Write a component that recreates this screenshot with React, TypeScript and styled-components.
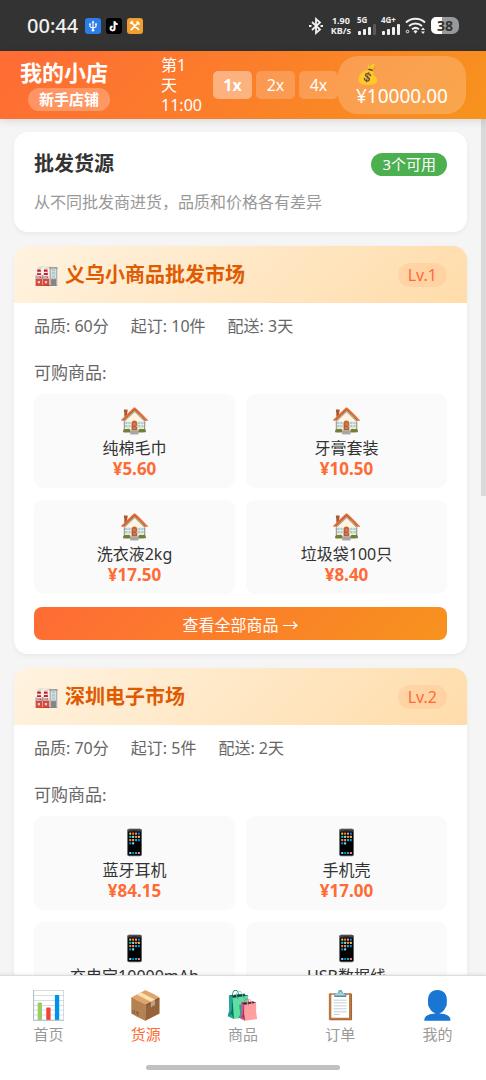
import React, { useState } from "react";
import styled, { createGlobalStyle, css } from "styled-components";

const GlobalStyle = createGlobalStyle`
  * { box-sizing: border-box; }
  body {
    margin: 0;
    background: #f5f5f5;
    color: #333;
    font-family: "Noto Sans", "Noto Sans CJK SC", sans-serif;
    font-size: 16px;
  }
  button { font-family: inherit; border: 0; padding: 0; cursor: pointer; }
  h1, h2, p, ul { margin: 0; padding: 0; }
  ul { list-style: none; }
`;

const Screen = styled.div`
  display: flex;
  flex-direction: column;
  height: 100vh;
`;

/* ---------- status bar ---------- */

const StatusBar = styled.div`
  flex: none;
  display: flex;
  align-items: center;
  justify-content: space-between;
  height: 51px;
  padding: 0 27px;
  background: #333;
  color: #f0f0f0;
`;

const StatusGroup = styled.div`
  display: flex;
  align-items: center;
  gap: 5px;
`;

const Clock = styled.span`
  margin-right: 2px;
  font-size: 20px;
  font-weight: 500;
  line-height: 24px;
`;

const NetSpeed = styled.span`
  margin: 0 1px 0 3px;
  font-size: 9px;
  font-weight: 700;
  line-height: 10px;
  text-align: center;
`;

const Signal = styled.span`
  display: flex;
  flex-direction: column;
  font-size: 8px;
  font-weight: 700;
  line-height: 8px;
`;

const Battery = styled.span`
  width: 28px;
  height: 17px;
  border-radius: 5px 7px 7px 5px;
  background: linear-gradient(90deg, #fff 38%, #999 38%);
  color: #333;
  font-size: 14px;
  font-weight: 700;
  line-height: 17px;
  text-align: center;
`;

/* ---------- shop header ---------- */

const Header = styled.header`
  flex: none;
  z-index: 1;
  display: flex;
  align-items: center;
  padding: 4px 20px;
  background: linear-gradient(135deg, #ff6b35, #f7931e);
  box-shadow: 0 2px 8px rgba(0, 0, 0, 0.12);
  color: #fff;
`;

const Shop = styled.div`
  flex: 1;
`;

const ShopName = styled.h1`
  margin-bottom: 4px;
  font-size: 22px;
  font-weight: 700;
  line-height: 24px;
`;

const ShopRank = styled.span`
  display: inline-block;
  margin-left: 8px;
  padding: 0 11px;
  border-radius: 12px;
  background: rgba(255, 255, 255, 0.25);
  font-size: 15px;
  font-weight: 700;
  line-height: 23px;
  vertical-align: top;
`;

const GameTime = styled.time`
  margin-right: 11px;
  font-size: 16px;
  line-height: 20px;
`;

const Speeds = styled.div`
  display: flex;
  gap: 4px;
`;

const SpeedButton = styled.button<{ $active: boolean }>`
  width: 39px;
  height: 28px;
  border-radius: 5px;
  background: rgba(255, 255, 255, ${(p) => (p.$active ? 0.4 : 0.2)});
  color: #fff;
  font-size: 16px;
  font-weight: ${(p) => (p.$active ? 700 : 400)};
`;

const Money = styled.div`
  padding: 7px 18px;
  border-radius: 20px;
  background: rgba(255, 255, 255, 0.2);
  font-size: 19px;
  line-height: 22px;
`;

const MoneyIcon = styled.span`
  display: block;
`;

/* ---------- content ---------- */

const Body = styled.div`
  flex: 1;
  min-height: 0;
  display: flex;
`;

const Main = styled.main`
  flex: 1;
  overflow-y: auto;
  scrollbar-width: none;
  display: flex;
  flex-direction: column;
  gap: 14px;
  padding: 13px 14px;
`;

const Rail = styled.div`
  flex: none;
  width: 5px;
`;

const Thumb = styled.div`
  height: 44%;
  background: #d9d9d9;
`;

const Card = styled.section`
  flex: none;
  overflow: hidden;
  border-radius: 14px;
  background: #fff;
  box-shadow: 0 2px 5px rgba(0, 0, 0, 0.05);
`;

const Intro = styled(Card)`
  display: grid;
  gap: 14px;
  padding: 20px 20px 18px;
`;

const Row = styled.div`
  display: flex;
  align-items: center;
  justify-content: space-between;
`;

const Title = styled.h2`
  font-size: 20px;
  font-weight: 700;
  line-height: 24px;
`;

const Available = styled.span`
  padding: 0 11px;
  border-radius: 12px;
  background: #4caf50;
  color: #fff;
  font-size: 15px;
  line-height: 23px;
`;

const Hint = styled.p`
  color: #999;
  font-size: 16px;
  line-height: 24px;
`;

const MarketHead = styled.div`
  display: flex;
  align-items: center;
  justify-content: space-between;
  height: 57px;
  padding: 0 20px;
  background: linear-gradient(135deg, #fff3e0, #ffdcaa);
`;

const MarketName = styled(Title)`
  display: flex;
  gap: 6px;
  color: #e05a00;
`;

const Level = styled.span`
  padding: 0 10px;
  border-radius: 12px;
  background: rgba(255, 107, 53, 0.1);
  color: #ff6b35;
  font-size: 16px;
  line-height: 24px;
`;

const MarketBody = styled.div`
  padding: 11px 20px 14px;
`;

const Facts = styled.ul`
  display: flex;
  gap: 22px;
  color: #666;
  font-size: 16px;
  line-height: 24px;
`;

const Label = styled.p`
  margin: 23px 0 9px;
  color: #666;
  font-size: 17px;
  line-height: 24px;
`;

const Goods = styled.ul`
  display: grid;
  grid-template-columns: 1fr 1fr;
  gap: 12px 11px;
`;

const GoodsItem = styled.li`
  display: flex;
  flex-direction: column;
  align-items: center;
  padding: 11px 8px 10px;
  border-radius: 9px;
  background: #fafafa;
`;

const GoodsIcon = styled.span`
  height: 33px;
  font-size: 25px;
  line-height: 29px;
`;

const GoodsName = styled.span`
  font-size: 16px;
  line-height: 21px;
`;

const Price = styled.span`
  color: #ff6b35;
  font-size: 17px;
  font-weight: 700;
  line-height: 19px;
`;

const ViewAll = styled.button`
  display: block;
  width: 100%;
  height: 33px;
  margin-top: 13px;
  border-radius: 8px;
  background: linear-gradient(135deg, #ff6b35, #f7931e);
  color: #fff;
  font-size: 16px;
`;

/* ---------- bottom tabs ---------- */

const TabBar = styled.nav`
  flex: none;
  border-top: 1px solid #ddd;
  background: #fff;
  box-shadow: 0 -1px 3px rgba(0, 0, 0, 0.08);
  z-index: 1;
`;

const Tabs = styled.div`
  display: grid;
  grid-template-columns: repeat(5, 1fr);
  padding-top: 11px;
`;

const Tab = styled.button<{ $active: boolean }>`
  display: flex;
  flex-direction: column;
  align-items: center;
  background: none;
  color: #999;
  font-size: 15px;
  line-height: 24px;
  ${(p) =>
    p.$active &&
    css`
      color: #ff6b35;
    `}
`;

const TabIcon = styled.span`
  height: 35px;
  font-size: 28px;
  line-height: 35px;
`;

const HomeBar = styled.div`
  width: 40%;
  height: 5px;
  margin: 19px auto 10px;
  border-radius: 3px;
  background: #c0c0c0;
`;

/* ---------- data ---------- */

type Product = { name: string; price?: string };
type Market = {
  name: string;
  level: number;
  quality: number;
  minimum: number;
  days: number;
  icon: string;
  products: Product[];
};

const markets: Market[] = [
  {
    name: "义乌小商品批发市场",
    level: 1,
    quality: 60,
    minimum: 10,
    days: 3,
    icon: "🏠",
    products: [
      { name: "纯棉毛巾", price: "5.60" },
      { name: "牙膏套装", price: "10.50" },
      { name: "洗衣液2kg", price: "17.50" },
      { name: "垃圾袋100只", price: "8.40" },
    ],
  },
  {
    name: "深圳电子市场",
    level: 2,
    quality: 70,
    minimum: 5,
    days: 2,
    icon: "📱",
    products: [
      { name: "蓝牙耳机", price: "84.15" },
      { name: "手机壳", price: "17.00" },
      { name: "充电宝10000mAh" },
      { name: "USB数据线" },
    ],
  },
];

const tabs = [
  { icon: "📊", label: "首页" },
  { icon: "📦", label: "货源" },
  { icon: "🛍️", label: "商品" },
  { icon: "📋", label: "订单" },
  { icon: "👤", label: "我的" },
];

/* ---------- status icons ---------- */

const UsbIcon = () => (
  <svg width="16" height="16" viewBox="0 0 16 16">
    <rect width="16" height="16" rx="3" fill="#2b7de9" />
    <path d="M8 4v8M5 6.500v2.200l3 1.600 3-1.600V6.500" fill="none" stroke="#fff" strokeWidth="1.100" />
    <path d="M8 2.500l1.500 2.200h-3z" fill="#fff" />
    <circle cx="8" cy="12.300" r="1.300" fill="#fff" />
    <circle cx="5" cy="6.300" r="1" fill="#fff" />
    <rect x="10.100" y="5.300" width="1.800" height="1.800" fill="#fff" />
  </svg>
);

const NoteIcon = () => (
  <svg width="16" height="16" viewBox="0 0 16 16">
    <rect width="16" height="16" rx="3" fill="#000" />
    <g fill="none" strokeWidth="1.500">
      <path d="M8.200 3v7.200a2 2 0 1 1-2-2M8.200 3c.2 1.800 1.400 2.800 3 3" stroke="#25f4ee" />
      <path d="M9 3.600v7.200a2 2 0 1 1-2-2M9 3.600c.2 1.800 1.400 2.800 3 3" stroke="#fe2c55" />
      <path d="M8.600 3.300v7.200a2 2 0 1 1-2-2M8.600 3.300c.2 1.800 1.400 2.800 3 3" stroke="#fff" />
    </g>
  </svg>
);

const ToolsIcon = () => (
  <svg width="16" height="16" viewBox="0 0 16 16">
    <rect width="16" height="16" rx="3" fill="#f0a030" />
    <path d="M5 5l6.500 6.500M11.500 4.500L4.300 11.700" stroke="#fff" strokeWidth="1.700" strokeLinecap="round" />
    <path d="M3.300 5.700l2.400-2.400" stroke="#fff" strokeWidth="2" />
    <path d="M10.300 3.200a1.900 1.900 0 0 0 2.600 2.600" fill="none" stroke="#fff" strokeWidth="1.300" />
  </svg>
);

const BluetoothIcon = () => (
  <svg width="14" height="18" viewBox="0 0 14 18" fill="none" stroke="#f0f0f0" strokeWidth="1.800">
    <path d="M3 5l8 7.500-4 3.500V2l4 3.500L3 13" />
    <path d="M0 9h2.500M11.500 9H14" strokeWidth="2" />
  </svg>
);

const Bars = ({ dim }: { dim?: boolean }) => (
  <svg width="19" height="11" viewBox="0 0 19 11" fill="#f0f0f0">
    <rect x="1" y="7" width="3" height="4" rx="1" />
    <rect x="6" y="5" width="3" height="6" rx="1" />
    <rect x="11" y="3" width="3" height="8" rx="1" />
    <rect x="16" y="0" width="3" height="11" rx="1" fill={dim ? "#5a5a5a" : "#f0f0f0"} />
  </svg>
);

const WifiIcon = () => (
  <svg width="21" height="17" viewBox="0 0 21 17">
    <g fill="none" stroke="#f0f0f0" strokeWidth="2">
      <path d="M1 5.500a14 14 0 0 1 19 0" />
      <path d="M4 9a10 10 0 0 1 13 0" />
      <path d="M7 12.300a5.500 5.500 0 0 1 7 0" />
    </g>
    <path d="M8.500 14.200a3 3 0 0 1 4 0l-2 2.600z" fill="#f0f0f0" />
    <path d="M18 10.500l2 2.500h-4zM18 17l2-2.500h-4z" fill="#f0f0f0" />
    <circle cx="2.500" cy="14.500" r="1.300" fill="none" stroke="#f0f0f0" />
  </svg>
);

/* ---------- views ---------- */

const MarketCard = ({ market }: { market: Market }) => (
  <Card>
    <MarketHead>
      <MarketName>
        <span>🏭</span>
        {market.name}
      </MarketName>
      <Level>Lv.{market.level}</Level>
    </MarketHead>
    <MarketBody>
      <Facts>
        <li>品质: {market.quality}分</li>
        <li>起订: {market.minimum}件</li>
        <li>配送: {market.days}天</li>
      </Facts>
      <Label>可购商品:</Label>
      <Goods>
        {market.products.map((p) => (
          <GoodsItem key={p.name}>
            <GoodsIcon>{market.icon}</GoodsIcon>
            <GoodsName>{p.name}</GoodsName>
            {p.price && <Price>¥{p.price}</Price>}
          </GoodsItem>
        ))}
      </Goods>
      <ViewAll type="button">查看全部商品 →</ViewAll>
    </MarketBody>
  </Card>
);

export default function App() {
  const [speed, setSpeed] = useState(1);
  const [tab, setTab] = useState("货源");

  return (
    <Screen>
      <GlobalStyle />
      <StatusBar>
        <StatusGroup>
          <Clock>00:44</Clock>
          <UsbIcon />
          <NoteIcon />
          <ToolsIcon />
        </StatusGroup>
        <StatusGroup>
          <BluetoothIcon />
          <NetSpeed>
            1.90
            <br />
            KB/s
          </NetSpeed>
          <Signal>
            5G
            <Bars dim />
          </Signal>
          <Signal>
            4G+
            <Bars />
          </Signal>
          <WifiIcon />
          <Battery>38</Battery>
        </StatusGroup>
      </StatusBar>

      <Header>
        <Shop>
          <ShopName>我的小店</ShopName>
          <ShopRank>新手店铺</ShopRank>
        </Shop>
        <GameTime>
          第1
          <br />
          天
          <br />
          11:00
        </GameTime>
        <Speeds>
          {[1, 2, 4].map((s) => (
            <SpeedButton key={s} type="button" $active={s === speed} onClick={() => setSpeed(s)}>
              {s}x
            </SpeedButton>
          ))}
        </Speeds>
        <Money>
          <MoneyIcon>💰</MoneyIcon>
          ¥10000.00
        </Money>
      </Header>

      <Body>
        <Main>
          <Intro>
            <Row>
              <Title>批发货源</Title>
              <Available>3个可用</Available>
            </Row>
            <Hint>从不同批发商进货，品质和价格各有差异</Hint>
          </Intro>
          {markets.map((m) => (
            <MarketCard key={m.name} market={m} />
          ))}
        </Main>
        <Rail>
          <Thumb />
        </Rail>
      </Body>

      <TabBar>
        <Tabs>
          {tabs.map((t) => (
            <Tab key={t.label} type="button" $active={t.label === tab} onClick={() => setTab(t.label)}>
              <TabIcon>{t.icon}</TabIcon>
              {t.label}
            </Tab>
          ))}
        </Tabs>
        <HomeBar />
      </TabBar>
    </Screen>
  );
}
